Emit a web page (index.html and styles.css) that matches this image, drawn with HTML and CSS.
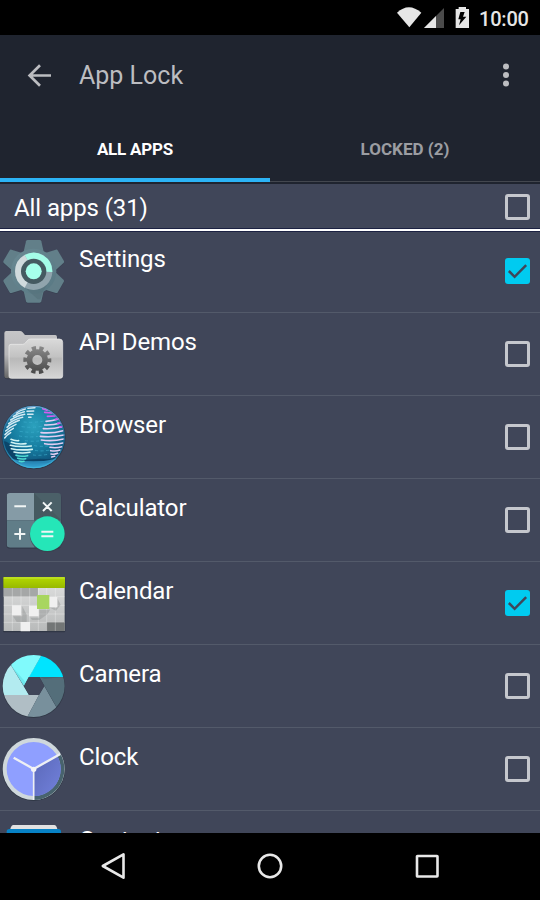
FILE: index.html
```html
<!DOCTYPE html>
<html lang="en">
<head>
<meta charset="utf-8">
<title>App Lock</title>
<link rel="stylesheet" href="styles.css">
</head>
<body>
<div class="phone">
  <div class="status">
    <svg class="status-icons" width="80" height="35" viewBox="0 0 240 105">
      <path fill="#e6e6e6" d="M21 38Q56 5 94 38L58 82Z"/>
      <path fill="#4b4b4b" d="M162 24V84H102Z"/>
      <path fill="#e6e6e6" d="M102 84L138 48V84Z"/>
      <path fill="#e6e6e6" d="M206 21H228V27H237V84H197V27H206Z"/>
      <path fill="#000" d="M211 36H224L219 50H229L207 76L212 58H205Z"/>
    </svg>
    <span class="time">10:00</span>
  </div>
  <header class="bar">
    <svg class="back" width="24" height="24" viewBox="0 0 24 24"><path d="M24 11.5H3M13 1.3L2.6 11.5L13 21.7"/></svg>
    <h1>App Lock</h1>
    <svg class="more" width="8" height="28" viewBox="0 0 8 28"><circle cx="4" cy="4.5" r="3"/><circle cx="4" cy="13" r="3"/><circle cx="4" cy="21.5" r="3"/></svg>
  </header>
  <nav class="tabs">
    <div class="tab active"><span>ALL APPS</span></div>
    <div class="tab"><span>LOCKED (2)</span></div>
  </nav>
  <div class="section"><span>All apps (31)</span><i class="box"></i></div>
  <main class="list">
    <div class="row">
      <svg class="icon" viewBox="0 -15 204 246">
        <defs>
          <linearGradient id="gear" x1="0" y1="0" x2="1" y2="1"><stop offset="0" stop-color="#6a8993"/><stop offset="1" stop-color="#587883"/></linearGradient>
          <path id="tooth" d="M-31 -55L-23 -90Q-22 -94 -18 -94H18Q22 -94 23 -90L31 -55Z"/>
        </defs>
        <g transform="translate(101 111)" fill="#303b49" opacity=".5">
          <use href="#tooth"/><use href="#tooth" transform="rotate(60)"/><use href="#tooth" transform="rotate(120)"/><use href="#tooth" transform="rotate(180)"/><use href="#tooth" transform="rotate(240)"/><use href="#tooth" transform="rotate(300)"/>
        </g>
        <g transform="translate(101 109)" fill="#627f89">
          <use href="#tooth"/><use href="#tooth" transform="rotate(60)"/><use href="#tooth" transform="rotate(120)"/><use href="#tooth" transform="rotate(180)"/><use href="#tooth" transform="rotate(240)"/><use href="#tooth" transform="rotate(300)"/>
          <circle r="68" fill="url(#gear)"/>
          <path d="M-38 38L12 84H20L28 60L50 24Z" fill="#547078" opacity=".55"/>
          <circle r="56" fill="#90a4ad"/>
          <path d="M0 0L56 2A56 56 0 0 0 -27 -49Z" fill="#a4fce8"/>
          <path d="M0 0L-27 -49A56 56 0 0 0 -27 49Z" fill="#d0dadd"/>
          <circle r="38" fill="#455a61"/>
          <circle r="24" fill="#a6ffeb"/>
        </g>
      </svg>
      <span>Settings</span><i class="box checked"><svg viewBox="0 0 26 26"><path d="M4 13L10 19L22 7"/></svg></i>
    </div>
    <div class="row">
      <svg class="icon" viewBox="0 -6 204 246">
        <defs>
          <linearGradient id="fb" x1="0" y1="0" x2="0" y2="1"><stop offset="0" stop-color="#c6c6c8"/><stop offset=".5" stop-color="#b7b7b9"/><stop offset="1" stop-color="#666"/></linearGradient>
          <linearGradient id="ff" x1="0" y1="0" x2="0" y2="1"><stop offset="0" stop-color="#dadada"/><stop offset=".45" stop-color="#c2c2c2"/><stop offset=".5" stop-color="#b9b9b9"/><stop offset="1" stop-color="#d6d6d6"/></linearGradient>
          <linearGradient id="fg" gradientUnits="userSpaceOnUse" x1="0" y1="-42" x2="0" y2="42"><stop offset="0" stop-color="#8a8a8a"/><stop offset="1" stop-color="#474747"/></linearGradient>
        </defs>
        <path d="M13 184V54Q13 48 19 48H60Q65 48 68 52L75 60H166Q171 60 171 66L174 72Q189 74 189 84V186Q189 193 182 193H22Q13 192 13 184Z" fill="#303543"/>
        <path d="M13 182V54Q13 48 19 48H60Q65 48 68 52L75 60H166Q171 60 171 66V190H22Q13 190 13 182Z" fill="url(#fb)"/>
        <path d="M27 184V94Q27 88 33 88H68Q73 88 76 84L83 76Q86 72 92 72H178Q188 72 188 82V183Q188 190 181 190H34Q27 190 27 184Z" fill="url(#ff)" stroke="#eee" stroke-width="2"/>
        <g transform="translate(112 135)" fill="none" stroke="url(#fg)">
          <circle r="23.5" stroke-width="17"/>
          <circle r="36" stroke-width="12" stroke-dasharray="12.6 10.02" stroke-dashoffset="6.3"/>
        </g>
      </svg>
      <span>API Demos</span><i class="box"></i>
    </div>
    <div class="row">
      <svg class="icon" viewBox="0 -6 204 246">
        <defs>
          <radialGradient id="sea" cx=".5" cy=".32" r=".7"><stop offset="0" stop-color="#2ba1bd"/><stop offset=".55" stop-color="#157a9e"/><stop offset=".86" stop-color="#10547c"/><stop offset="1" stop-color="#35a7cf"/></radialGradient>
          <linearGradient id="rim" x1="0" y1="0" x2="0" y2="1"><stop offset="0" stop-color="#84a7d8"/><stop offset=".5" stop-color="#175c86"/><stop offset="1" stop-color="#42b9df"/></linearGradient>
          <clipPath id="ball"><circle cx="101" cy="117" r="94"/></clipPath>
        </defs>
        <circle cx="101" cy="118" r="96" fill="#2e3748"/>
        <circle cx="101" cy="117" r="94" fill="url(#sea)"/>
        <g clip-path="url(#ball)" fill="none" stroke-linecap="round">
          <path d="M8 130Q20 128 34 142Q46 172 56 190Q100 178 156 184Q180 160 193 130Q185 180 150 196Q100 196 56 196Q20 175 8 130Z" fill="#0a3c60" opacity=".75"/>
          <g stroke="#3fb0d0" stroke-width="3" stroke-dasharray="7 10" opacity=".6">
            <path d="M72 72Q100 75 132 69M66 86Q96 90 126 85M60 100Q90 105 116 101M58 114Q88 119 114 115M76 128Q96 131 116 129M104 143Q120 147 148 143M106 157Q124 161 150 156M100 171Q118 174 150 168"/>
          </g>
          <path d="M30 182Q100 198 172 182Q145 214 100 214Q55 214 30 182Z" fill="#39ace0" opacity=".65"/>
          <g stroke="#d2e8f2" stroke-width="4.6">
            <path d="M49 45Q59 37 76 33M40 55Q54 45 73 41M32 66Q49 54 74 49M26 77Q42 64 68 58M21 88Q35 75 58 67M17 99Q30 87 48 79M15 110Q27 98 40 91M14 120Q22 110 32 104"/>
            <path d="M84 31L105 29M81 40L101 39M83 49L99 49M86 58L93 58"/>
          </g>
          <g stroke="#d0f4f4" stroke-width="4.8">
            <path d="M33 124Q43 129 56 128M34 133Q51 140 78 137M31 142Q56 148 94 144M34 152Q60 158 97 154M42 162Q64 167 90 163"/>
            <path stroke="#4fdcd2" d="M48 172Q63 177 83 173M53 181Q64 184 77 182M58 190Q65 192 72 190"/>
          </g>
          <g stroke="#e2cdf3" stroke-width="4.8">
            <path d="M138 70Q158 69 175 63M134 81Q159 82 182 75M130 92Q158 94 186 86M123 104Q157 107 189 98M121 115Q156 119 192 111M124 126Q158 131 191 123M134 137Q160 142 189 135M150 148Q170 151 186 146M152 158Q168 161 180 156M153 168Q165 170 173 166M155 177L164 175"/>
            <path stroke="#d65cf0" d="M128 32L141 37M134 43L155 45M142 55L165 54M166 64L174 63M173 76L181 75M179 87L186 86"/>
          </g>
          <circle cx="101" cy="117" r="92" stroke="url(#rim)" stroke-width="4" opacity=".75"/>
        </g>
      </svg>
      <span>Browser</span><i class="box"></i>
    </div>
    <div class="row">
      <svg class="icon" viewBox="0 -3 204 246">
        <defs><clipPath id="calc"><rect x="20" y="39" width="163" height="164" rx="10"/></clipPath></defs>
        <rect x="19" y="41" width="165" height="165" rx="11" fill="#333b4b"/>
        <g clip-path="url(#calc)">
          <path d="M20 39H102V121H20Z" fill="#859ba6"/><path d="M102 39H183V121H102Z" fill="#4b6068"/><path d="M102 39L183 120V121H102Z" fill="#465960"/><path d="M20 121H102V203H20Z" fill="#607d88"/><path d="M102 121H183V203H102Z" fill="#526d77"/>
        </g>
        <circle cx="142" cy="164" r="53" fill="#37414d" opacity=".6"/>
        <circle cx="142" cy="161" r="52" fill="#25e6b8"/>
        <path d="M43 79H78M129 67L155 93M155 67L129 93M43 162H76M60 145V179M124 155H160M124 169H160" fill="none" stroke="#f1f5f5" stroke-width="6"/>
      </svg>
      <span>Calculator</span><i class="box"></i>
    </div>
    <div class="row">
      <svg class="icon" viewBox="0 -9 204 246">
        <defs>
          <linearGradient id="green" x1="0" y1="0" x2="0" y2="1"><stop offset="0" stop-color="#b4d900"/><stop offset="1" stop-color="#98b900"/></linearGradient>
          <linearGradient id="paper" x1="0" y1="0" x2="0" y2="1"><stop offset="0" stop-color="#d9dada"/><stop offset="1" stop-color="#b8baba"/></linearGradient>
        </defs>
        <rect x="9" y="36" width="187" height="166" rx="3" fill="#303746"/>
        <rect x="11" y="68" width="183" height="130" fill="url(#paper)"/>
        <path d="M11 68H114V95H11Z" fill="#a5a7a7"/><path d="M140 171H194V198H140Z" fill="#737676"/>
        <path d="M37 68V198M63 68V198M89 68V198M115 68V198M140 68V198M166 68V198M11 95H194M11 121H194M11 147H194M11 172H194" stroke="#fff" stroke-opacity=".42" stroke-width="2" fill="none"/>
        <path d="M39 154H67V124L80 149V171H50ZM91 158H118V134H150L142 148L118 165H96ZM151 129H172V100L182 119L168 137Z" fill="#777b7b" opacity=".3"/>
        <path d="M36 121H63V151H36ZM87 122H116V154H87ZM146 96H172V126H146ZM62 171H90V199H62Z" fill="#f0f0f0"/>
        <rect x="111" y="90" width="37" height="42" fill="#a8d65f"/>
        <rect x="10" y="36" width="185" height="33" rx="2" fill="url(#green)"/><path d="M11 39H194" stroke="#c6e83a" stroke-width="3"/>
      </svg>
      <span>Calendar</span><i class="box checked"><svg viewBox="0 0 26 26"><path d="M4 13L10 19L22 7"/></svg></i>
    </div>
    <div class="row">
      <svg class="icon" viewBox="0 0 204 246">
        <defs><clipPath id="lens"><circle cx="101" cy="123" r="93"/></clipPath></defs>
        <circle cx="101" cy="125" r="94" fill="#2f3745"/>
        <g clip-path="url(#lens)">
          <path d="M123 33L200 20V96H86Z" fill="#00e4ff"/>
          <path d="M34 62L20 0H142L72 123Z" fill="#80fafc"/>
          <path d="M34 62L0 40V150H87Z" fill="#b3ebf0"/>
          <path d="M0 150H117L83 214L60 240H0Z" fill="#b0bec5"/>
          <path d="M117 150L133 123L170 188L150 230H74Z" fill="#78909c"/>
          <path d="M118 96H210V210H183Z" fill="#546e7a"/>
          <path d="M34 62L72 123L77 112Z" fill="#63dce2" opacity=".6"/>
          <path d="M118 96H193L133 101Z" fill="#3f5b68" opacity=".6"/>
        </g>
        <path d="M86 96H118L133 123L117 150H87L72 123Z" fill="#404659"/>
      </svg>
      <span>Camera</span><i class="box"></i>
    </div>
    <div class="row">
      <svg class="icon" viewBox="0 0 204 246">
        <defs>
          <linearGradient id="shade" x1="0" y1="0" x2="1" y2="1"><stop offset="0" stop-color="#5a68b8"/><stop offset="1" stop-color="#7281dc"/></linearGradient>
        </defs>
        <circle cx="101" cy="125" r="94" fill="#2f3745"/>
        <circle cx="101" cy="123" r="93" fill="#cfd8dc"/>
        <path d="M101 123L181 77A93 93 0 0 1 101 216Z" fill="#48636d"/>
        <circle cx="101" cy="123" r="81" fill="#8f9fff"/>
        <path d="M101 123L171 82A81 81 0 0 1 101 204Z" fill="url(#shade)"/>
        <path d="M101 123L41 89M101 123L181 78" stroke="#eef0f4" stroke-width="7" fill="none"/>
        <path d="M101 123V216" stroke="#eef0f4" stroke-width="5"/><circle cx="101" cy="124" r="8" fill="#f4f4f6"/>
      </svg>
      <span>Clock</span><i class="box"></i>
    </div>
    <div class="row">
      <svg class="icon" viewBox="0 249 204 246">
        <path d="M31 303Q34 291 40 291H163Q169 291 172 303Z" fill="#e2e2e2"/>
        <rect x="20" y="303" width="163" height="150" rx="8" fill="#0782c6"/>
      </svg>
      <span>Contacts</span><i class="box"></i>
    </div>
  </main>
  <footer class="nav">
    <svg width="26" height="28" viewBox="0 0 26 28"><path d="M23.5 2.3V25.7L2.8 14Z"/></svg>
    <svg width="26" height="28" viewBox="0 0 26 28"><circle cx="13" cy="14" r="11.2"/></svg>
    <svg width="26" height="28" viewBox="0 0 26 28"><rect x="3" y="4" width="20.5" height="20.5" rx=".5"/></svg>
  </footer>
</div>
</body>
</html>
```
FILE: styles.css
```css
* { box-sizing: border-box; }
body { margin: 0; background: #000; font-family: Roboto, sans-serif; }
.phone { width: 540px; height: 900px; display: flex; flex-direction: column; overflow: hidden; }

.status { height: 35px; flex: none; background: #000; display: flex; justify-content: flex-end; padding-right: 11px; }
.time { width: 69px; padding-left: 19px; margin-left: -10px; font-size: 20px; line-height: 38px; letter-spacing: -.2px; font-weight: 500; color: #e6e6e6; white-space: nowrap; }
.time { width: 69px; }
.status-icons { flex: none; margin-right: 0; }

.bar { height: 81px; flex: none; background: #1f242f; display: flex; align-items: center; padding: 0 30px 0 27px; }
.bar h1 { margin: 0 auto 0 28px; padding-top: 1px; font-size: 25px; font-weight: 400; line-height: 30px; color: #bcbdc1; }
.back { fill: none; stroke: #bcbdc1; stroke-width: 2.7; }
.more { fill: #bcbdc1; }

.tabs { height: 68px; flex: none; background: #1f242f; display: flex; border-bottom: 2px solid #1f242f; }
.tab { flex: 1; text-align: center; font-size: 17px; font-weight: 700; line-height: 66px; color: #9b9da2; border-bottom: 1px solid #43474f; }
.tab.active { color: #fff; letter-spacing: -.2px; border-bottom: 4px solid #2cb3f5; }

.section { height: 47px; flex: none; background: #404659; border-bottom: 2px solid #fff; display: flex; align-items: center; justify-content: space-between; padding: 0 10px 0 14px; font-size: 24px; letter-spacing: -.1px; color: #fff; box-shadow: inset 0 -1px #1b2142, 0 1px #1b2142; position: relative; z-index: 1; }
.section span { padding-top: 2px; }

.list { flex: 1; min-height: 0; margin-top: -1px; overflow: hidden; background: #404659; }
.row { height: 83px; display: flex; align-items: flex-start; padding-right: 10px; border-bottom: 1px solid #535a6a; color: #fff; font-size: 24px; letter-spacing: -.12px; line-height: 28px; }
.row > span { margin: 15px auto 0 11px; }
.row .box { align-self: center; }
.icon { width: 68px; height: 82px; flex: none; }

.box { width: 25px; height: 26px; flex: none; border: 3px solid #c5c7cd; border-radius: 3px; }
.box.checked { border: 0; background: #00cbf0; }
.box svg { display: block; width: 25px; height: 26px; fill: none; stroke: #404659; stroke-width: 2.6; }

.nav { height: 67px; flex: none; background: #000; display: flex; justify-content: space-between; align-items: center; padding: 0 100px 2px; }
.nav svg { fill: none; stroke: #e8e8e8; stroke-width: 2.6; stroke-linejoin: round; }
```
